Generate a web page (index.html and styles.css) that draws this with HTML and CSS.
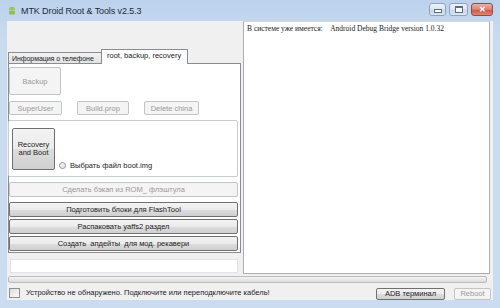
FILE: index.html
```html
<!DOCTYPE html>
<html lang="ru">
<head>
  <meta charset="UTF-8">
  <meta name="viewport" content="width=device-width, initial-scale=1.0">
  <title>MTK Droid Root &amp; Tools</title>
  <link rel="stylesheet" href="styles.css">
</head>
<body>

  <div class="window">

    <!-- Title bar -->
    <div class="titlebar">
      <svg class="app-icon" width="8" height="10" viewBox="0 0 8 10">
        <path d="M1 4 A3 3 0 0 1 7 4 Z" fill="#8fc43c"/>
        <line x1="2" y1="0.8" x2="2.8" y2="2" stroke="#8fc43c" stroke-width="0.6"/>
        <line x1="6" y1="0.8" x2="5.2" y2="2" stroke="#8fc43c" stroke-width="0.6"/>
        <rect x="1" y="4.6" width="6" height="4" rx="0.8" fill="#8fc43c"/>
        <circle cx="2.8" cy="3" r="0.4" fill="#fff"/>
        <circle cx="5.2" cy="3" r="0.4" fill="#fff"/>
      </svg>
      <span class="title">MTK Droid Root &amp; Tools v2.5.3</span>
      <div class="controls">
        <span class="ctl ctl-min"><i></i></span>
        <span class="ctl ctl-max"><i></i></span>
        <span class="ctl ctl-close">&#x2715;</span>
      </div>
    </div>

    <!-- Client area -->
    <div class="client">
      <div class="main">
        <div class="left">
          <div class="tabs">
            <div class="tab">Информация о телефоне</div>
            <div class="tab active">root, backup, recovery</div>
          </div>
          <div class="tab-panel">
            <button class="btn btn-backup" disabled>Backup</button>
            <div class="btn-row">
              <button class="btn btn-small w-su" disabled>SuperUser</button>
              <button class="btn btn-small w-build" disabled>Build.prop</button>
              <button class="btn btn-small w-china" disabled>Delete china</button>
            </div>
            <div class="group">
              <button class="btn btn-recovery">Recovery<br>and Boot</button>
              <label class="radio"><span class="radio-dot"></span>Выбрать файл boot.img</label>
            </div>
            <button class="btn btn-wide first" disabled>Сделать бэкап из ROM_ флэштула</button>
            <button class="btn btn-wide">Подготовить блоки для FlashTool</button>
            <button class="btn btn-wide">Распаковать yaffs2 раздел</button>
            <button class="btn btn-wide">Создать&nbsp; апдейты&nbsp; для мод. рекавери</button>
          </div>
          <div class="textbox"></div>
        </div>
        <div class="console">В системе уже имеется:&nbsp;&nbsp;&nbsp; Android Debug Bridge version 1.0.32</div>
      </div>

      <div class="progress"></div>

      <div class="status">
        <span class="checkbox"></span>
        <span class="status-text">Устройство не обнаружено. Подключите или переподключите кабель!</span>
        <button class="btn btn-adb">ADB терминал</button>
        <button class="btn btn-reboot" disabled>Reboot</button>
      </div>
    </div>

  </div>

</body>
</html>
```

FILE: styles.css
```css
body {
  margin: 0;
  background: #c8daee;
  font-family: "Liberation Sans", Arial, sans-serif;
  font-size: 8px;
  color: #222;
}

/* Window frame */
.window {
  width: 500px;
  height: 308px;
  display: flex;
  flex-direction: column;
  background: linear-gradient(to bottom, #bcd2ec 0, #c9dbef 40px, #cbdcf0 100%);
  overflow: hidden;
}

.titlebar {
  height: 21px;
  display: flex;
  align-items: center;
  padding-left: 8px;
  box-sizing: border-box;
}

.app-icon {
  margin-right: 5px;
  margin-top: 1px;
}

.title {
  font-size: 9px;
  color: #1e2a3a;
  letter-spacing: -0.1px;
}

.controls {
  margin-left: auto;
  margin-right: 7px;
  align-self: flex-start;
  margin-top: 3px;
  display: flex;
  gap: 3px;
}

.ctl {
  height: 13px;
  border: 1px solid #8ea3bf;
  border-radius: 3px;
  box-sizing: border-box;
  display: flex;
  align-items: center;
  justify-content: center;
  background: linear-gradient(to bottom, #eef3fa 0, #d8e3f1 50%, #c6d5e8 51%, #dbe5f2 100%);
}

.ctl-min { width: 17px; }
.ctl-max { width: 19px; }

.ctl-min i {
  width: 6px;
  height: 2px;
  margin-top: 3px;
  background: #fff;
  border: 1px solid #5a6d84;
}

.ctl-max i {
  width: 6px;
  height: 4px;
  background: #fff;
  border: 1px solid #5a6d84;
  border-top-width: 2px;
}

.ctl-close {
  width: 22px;
  border-color: #9b4a3e;
  background: linear-gradient(to bottom, #eab2a6 0, #d98170 50%, #c9553f 51%, #dc8674 100%);
  color: #fff;
  font-size: 8px;
  font-weight: bold;
}

/* Client area */
.client {
  margin: 0 7px;
  height: 279px;
  background: #f0f0f0;
  display: flex;
  flex-direction: column;
}

.main {
  height: 254px;
  display: flex;
  gap: 2px;
}

.left {
  width: 234px;
  display: flex;
  flex-direction: column;
  padding-top: 28px;
  box-sizing: border-box;
}

.tabs {
  height: 14px;
  display: flex;
  align-items: flex-end;
  padding-left: 1px;
  position: relative;
  z-index: 2;
}

.tab {
  height: 11px;
  line-height: 11px;
  padding: 0 3px;
  width: 94px;
  box-sizing: border-box;
  border: 1px solid #898c95;
  border-bottom: none;
  background: linear-gradient(to bottom, #f2f2f2, #e3e3e3);
  white-space: nowrap;
  overflow: hidden;
  font-size: 7px;
  letter-spacing: -0.05px;
}

.tab.active {
  height: 15px;
  width: 87px;
  line-height: 12px;
  background: #fff;
  margin-left: -1px;
  margin-bottom: -1px;
  padding: 0 5px;
  font-size: 7.5px;
  letter-spacing: 0;
}

.tab-panel {
  height: 190px;
  margin-left: 1px;
  background: #fff;
  border: 1px solid #898c95;
  box-sizing: border-box;
  padding: 3px 2px 0 0;
  display: flex;
  flex-direction: column;
}

/* Buttons */
.btn {
  font-family: "Liberation Sans", Arial, sans-serif;
  font-size: 7.5px;
  color: #222;
  border: 1px solid #707070;
  border-radius: 2px;
  background: linear-gradient(to bottom, #f3f3f3 0, #ebebeb 50%, #dddddd 51%, #d0d0d0 100%);
  padding: 0;
  margin: 0;
  box-sizing: border-box;
  white-space: nowrap;
}

.btn:disabled {
  color: #9a9a9a;
  border-color: #c2c4c6;
  background: #f4f4f4;
}

.btn-backup {
  width: 52px;
  height: 28px;
  margin-left: 0;
}

.btn-row {
  display: flex;
  gap: 15px;
  margin-top: 6px;
}

.btn-small { height: 14px; }
.w-su { width: 53px; }
.w-build { width: 52px; }
.w-china { width: 55px; }

.group {
  margin-top: 5px;
  margin-left: -1px;
  height: 57px;
  border: 1px solid #c8cdd2;
  border-radius: 2px;
  box-sizing: border-box;
  display: flex;
  align-items: flex-start;
  padding: 7px 0 0 3px;
}

.btn-recovery {
  width: 43px;
  height: 42px;
  line-height: 8px;
}

.radio {
  display: flex;
  align-items: center;
  gap: 4px;
  margin-top: 33px;
  margin-left: 4px;
  font-size: 7.5px;
}

.radio-dot {
  width: 7px;
  height: 7px;
  border-radius: 50%;
  border: 1px solid #8f8f8f;
  box-sizing: border-box;
  background: radial-gradient(circle, #e4e4e4 0, #f8f8f8 100%);
}

.btn-wide {
  height: 15px;
  margin-top: 2px;
  width: 100%;
}

.btn-wide.first { margin-top: 5px; }
.btn-wide.first + .btn-wide { margin-top: 5px; }

.textbox {
  margin: 6px 0 0 3px;
  width: 228px;
  height: 14px;
  background: #fff;
  border: 1px solid #e2e3ea;
  box-sizing: border-box;
}

.console {
  width: 247px;
  height: 253px;
  background: #fff;
  border: 1px solid #abadb3;
  border-top-color: #d5d7dc;
  box-sizing: border-box;
  padding: 2px 3px;
  font-family: "Liberation Serif", "Times New Roman", serif;
  font-size: 7.5px;
  white-space: nowrap;
}

.progress {
  margin: 2px 6px 0 1px;
  height: 7px;
  border: 1px solid #bcbcbc;
  border-radius: 2px;
  box-sizing: border-box;
  background: linear-gradient(to bottom, #f3f3f3, #dcdcdc);
}

.status {
  display: flex;
  align-items: center;
  height: 16px;
  margin-top: 3px;
  padding-left: 2px;
}

.checkbox {
  width: 11px;
  height: 10px;
  border: 1px solid #8e8f8f;
  box-sizing: border-box;
  background: linear-gradient(to bottom right, #dcdcdc, #fbfbfb);
}

.status-text {
  margin-left: 6px;
  font-size: 7.5px;
}

.btn-adb {
  margin-left: auto;
  width: 69px;
  height: 12px;
  margin-top: 2px;
}

.btn-reboot {
  width: 37px;
  height: 12px;
  margin-top: 2px;
  margin-left: 9px;
  margin-right: 2px;
}
```
